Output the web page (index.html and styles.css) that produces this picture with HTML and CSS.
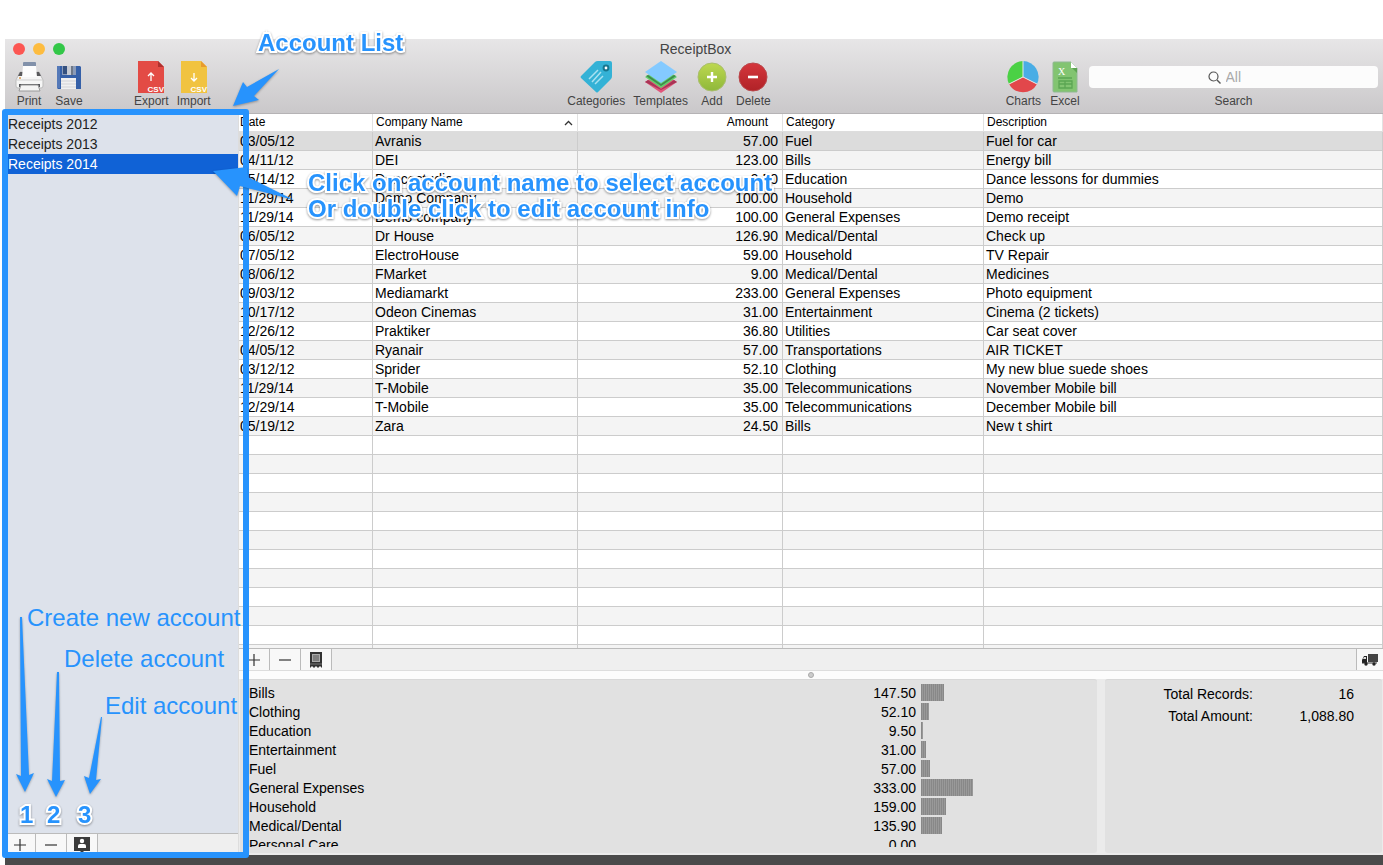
FILE: index.html
```
<!DOCTYPE html>
<html lang="en">
<head>
  <meta charset="UTF-8" />
  <meta name="viewport" content="width=device-width, initial-scale=1" />
  <title>ReceiptBox</title>
  <link rel="stylesheet" href="styles.css">
</head>
<body>

  <div class="window">
    <header class="toolbar">
      <div class="titlebar">
        <div class="lights">
          <button class="light red" aria-label="Close"></button>
          <button class="light yellow" aria-label="Minimize"></button>
          <button class="light green" aria-label="Zoom"></button>
        </div>
        <h1>ReceiptBox</h1>
      </div>
      <div class="tools">
        <button class="tool">
          <svg width="32" height="34" viewBox="0 0 32 34">
            <rect x="10" y="2" width="13" height="11" rx="1" fill="#8291aa"/>
            <path d="M7 12h19l4 8v6q0 2-2 2H5q-2 0-2-2v-6z" fill="#f6f6f6" stroke="#bbb"/>
            <path d="M7 12h19l2 4H5z" fill="#5a5a5d"/>
            <path d="M10 6h13l1 11H9z" fill="#fdfdfd"/>
            <path d="M3 20h27" stroke="#cfcfcf"/>
            <path d="M6 24h21v3H6z" fill="#55565a"/>
            <path d="M8 25h17l2 6H6z" fill="#f4f4f4" stroke="#9a9a9a"/>
            <circle cx="7" cy="18" r="1" fill="#d99a4e"/>
          </svg>
          Print
        </button>
        <button class="tool">
          <svg width="32" height="34" viewBox="0 0 32 34">
            <path d="M4 6h23l1 1v22H5l-1-1z" fill="#3560a8"/>
            <path d="M4 6h3v22H4z" fill="#5579b8"/>
            <path d="M9 6h14v9H9z" fill="#8a9bb8"/>
            <path d="M10 6h4v8h-4z" fill="#34507f"/>
            <path d="M14 6h4v9h-4z" fill="#c5cad3"/>
            <path d="M18 6h2v9h-2z" fill="#6e7887"/>
            <path d="M8 18h15v11H8z" fill="#f0f0f1"/>
            <path d="M8 21h15M8 24h15M8 27h15" stroke="#d2d3d7"/>
          </svg>
          Save
        </button>
        <span class="space"></span>
        <button class="tool">
          <svg width="32" height="34" viewBox="0 0 32 34">
            <path d="M3 1h20l6 6v26H3z" fill="#e34b45"/>
            <path d="M23 1l6 6h-6z" fill="#b0302f"/>
            <path d="M16 21v-8M13 16l3-3 3 3" fill="none" stroke="#fff" stroke-width="1.3"/>
            <text x="29" y="32" text-anchor="end" class="csv">CSV</text>
          </svg>
          Export
        </button>
        <button class="tool">
          <svg width="32" height="34" viewBox="0 0 32 34">
            <path d="M3 1h20l6 6v26H3z" fill="#f1c340"/>
            <path d="M23 1l6 6h-6z" fill="#e89b2e"/>
            <path d="M16 13v8M13 18l3 3 3-3" fill="none" stroke="#fff" stroke-width="1.3"/>
            <text x="29" y="32" text-anchor="end" class="csv">CSV</text>
          </svg>
          Import
        </button>
        <span class="stretch"></span>
        <button class="tool">
          <svg width="32" height="34" viewBox="0 0 32 34">
            <path d="M15 2q1-1 3-1h12q2 0 2 2v13q0 2-1 3L18 32q-1 1-2 0L1 18q-1-1 0-2z" fill="#34b2d6"/>
            <circle cx="26" cy="8" r="3.4" fill="#17768f"/>
            <circle cx="26" cy="8" r="1.4" fill="#fff"/>
            <path d="M18 10l-9 9M21 12L12 22M23 16l-8 8" stroke="#a9e2f1" stroke-width="1.5"/>
          </svg>
          Categories
        </button>
        <button class="tool">
          <svg width="32" height="34" viewBox="0 0 32 34">
            <path d="M16 12l16 10-16 11L0 22z" fill="#e0567a"/>
            <path d="M0 22l3-2 13 9 13-9 3 2-4 2-12 6-12-6z" fill="#a83556"/>
            <path d="M16 6l16 11-16 11L0 17z" fill="#62cf6c"/>
            <path d="M3 15l13 9 13-9 2 1-15 10L1 16z" fill="#3f8b4c"/>
            <path d="M16 1l16 11-16 11L0 12z" fill="#84caff"/>
          </svg>
          Templates
        </button>
        <button class="tool">
          <svg width="32" height="34" viewBox="0 0 32 34">
            <defs>
              <linearGradient id="lime" x2="0" y2="1"><stop stop-color="#bdd850"/><stop offset="1" stop-color="#8fb83a"/></linearGradient>
            </defs>
            <circle cx="16" cy="17" r="14" fill="url(#lime)" stroke="#a9bd6d"/>
            <path d="M16 12v10M11 17h10" stroke="#fff" stroke-width="2.4"/>
          </svg>
          Add
        </button>
        <button class="tool">
          <svg width="32" height="34" viewBox="0 0 32 34">
            <defs>
              <linearGradient id="crimson" x2="0" y2="1"><stop stop-color="#d5363c"/><stop offset="1" stop-color="#b02227"/></linearGradient>
            </defs>
            <circle cx="16" cy="17" r="14" fill="url(#crimson)" stroke="#b9474b"/>
            <path d="M11 17h10" stroke="#fff" stroke-width="2.6"/>
          </svg>
          Delete
        </button>
        <span class="space large"></span>
        <button class="tool">
          <svg width="32" height="34" viewBox="0 0 32 34">
            <path d="M16 17V1a16 16 0 0 1 14 23z" fill="#49ade5"/>
            <path d="M16 17l14 7a16 16 0 0 1-28 0z" fill="#e2474b"/>
            <path d="M16 17L2 24A16 16 0 0 1 16 1z" fill="#4bd145"/>
            <path d="M16 1v16l14 7M16 17L2 24" fill="none" stroke="#e8e8e8"/>
          </svg>
          Charts
        </button>
        <button class="tool">
          <svg width="32" height="34" viewBox="0 0 32 34">
            <path d="M5 2h17l6 6v24H5q-1 0-1-1V3q0-1 1-1z" fill="#82c471" stroke="#8fb893"/>
            <path d="M22 2l6 6h-6z" fill="#fff"/>
            <path d="M23 8h5v5z" fill="#5da452"/>
            <text x="9" y="15" class="xls">X</text>
            <path d="M9 18h14M10 21h13v7H10zM10 24h13M16 21v7" fill="none" stroke="#5ba653" stroke-width="1.3"/>
          </svg>
          Excel
        </button>
        <div class="search">
          <div class="search-box">
            <svg width="13" height="13" viewBox="0 0 13 13">
              <circle cx="5.5" cy="5.5" r="4.5" fill="none" stroke="#555" stroke-width="1.2"/>
              <path d="M9 9l3.5 3.5" stroke="#555" stroke-width="1.4"/>
            </svg>
            <input type="text" id="search" placeholder="All" />
          </div>
          <label for="search">Search</label>
        </div>
      </div>
    </header>

    <div class="content">
      <aside class="sidebar">
        <ul class="accounts">
          <li><a href="#">Receipts 2012</a></li>
          <li><a href="#">Receipts 2013</a></li>
          <li><a href="#" class="selected">Receipts 2014</a></li>
        </ul>
        <div class="button-bar">
          <button aria-label="Create new account"><svg width="12" height="12" viewBox="0 0 12 12"><path d="M6 0v12M0 6h12" stroke="#333" stroke-width="1.2"/></svg></button>
          <button aria-label="Delete account"><svg width="12" height="12" viewBox="0 0 12 12"><path d="M0 6h12" stroke="#333" stroke-width="1.2"/></svg></button>
          <button aria-label="Edit account"><svg width="16" height="18" viewBox="0 0 16 18"><path d="M0 1h16v14h-6l-2 2-2-2H0z" fill="#3b3b3b"/><circle cx="8" cy="5" r="2.2" fill="#fff"/><path d="M4 12V10q0-2 2-2h4q2 0 2 2v2z" fill="#fff"/></svg></button>
        </div>
      </aside>

      <main class="main">
        <div class="table-wrap">
          <table class="receipts">
            <colgroup><col class="col-date"><col class="col-company"><col class="col-amount"><col class="col-category"><col></colgroup>
            <thead>
              <tr>
                <th>Date</th>
                <th class="sorted">Company Name <svg width="9" height="6" viewBox="0 0 9 6"><path d="M1 5l3.500-3.500L8 5" fill="none" stroke="#333" stroke-width="1.3"/></svg></th>
                <th class="num">Amount</th>
                <th>Category</th>
                <th>Description</th>
              </tr>
            </thead>
            <tbody>
              <tr class="selected"><td>03/05/12</td><td>Avranis</td><td>57.00</td><td>Fuel</td><td>Fuel for car</td></tr>
              <tr><td>04/11/12</td><td>DEI</td><td>123.00</td><td>Bills</td><td>Energy bill</td></tr>
              <tr><td>05/14/12</td><td>Dancestudio</td><td>9.50</td><td>Education</td><td>Dance lessons for dummies</td></tr>
              <tr><td>11/29/14</td><td>Demo Company</td><td>100.00</td><td>Household</td><td>Demo</td></tr>
              <tr><td>11/29/14</td><td>Demo company</td><td>100.00</td><td>General Expenses</td><td>Demo receipt</td></tr>
              <tr><td>06/05/12</td><td>Dr House</td><td>126.90</td><td>Medical/Dental</td><td>Check up</td></tr>
              <tr><td>07/05/12</td><td>ElectroHouse</td><td>59.00</td><td>Household</td><td>TV Repair</td></tr>
              <tr><td>08/06/12</td><td>FMarket</td><td>9.00</td><td>Medical/Dental</td><td>Medicines</td></tr>
              <tr><td>09/03/12</td><td>Mediamarkt</td><td>233.00</td><td>General Expenses</td><td>Photo equipment</td></tr>
              <tr><td>10/17/12</td><td>Odeon Cinemas</td><td>31.00</td><td>Entertainment</td><td>Cinema (2 tickets)</td></tr>
              <tr><td>12/26/12</td><td>Praktiker</td><td>36.80</td><td>Utilities</td><td>Car seat cover</td></tr>
              <tr><td>04/05/12</td><td>Ryanair</td><td>57.00</td><td>Transportations</td><td>AIR TICKET</td></tr>
              <tr><td>03/12/12</td><td>Sprider</td><td>52.10</td><td>Clothing</td><td>My new blue suede shoes</td></tr>
              <tr><td>11/29/14</td><td>T-Mobile</td><td>35.00</td><td>Telecommunications</td><td>November Mobile bill</td></tr>
              <tr><td>12/29/14</td><td>T-Mobile</td><td>35.00</td><td>Telecommunications</td><td>December Mobile bill</td></tr>
              <tr><td>05/19/12</td><td>Zara</td><td>24.50</td><td>Bills</td><td>New t shirt</td></tr>
              <tr><td></td><td></td><td></td><td></td><td></td></tr>
              <tr><td></td><td></td><td></td><td></td><td></td></tr>
              <tr><td></td><td></td><td></td><td></td><td></td></tr>
              <tr><td></td><td></td><td></td><td></td><td></td></tr>
              <tr><td></td><td></td><td></td><td></td><td></td></tr>
              <tr><td></td><td></td><td></td><td></td><td></td></tr>
              <tr><td></td><td></td><td></td><td></td><td></td></tr>
              <tr><td></td><td></td><td></td><td></td><td></td></tr>
              <tr><td></td><td></td><td></td><td></td><td></td></tr>
              <tr><td></td><td></td><td></td><td></td><td></td></tr>
              <tr><td></td><td></td><td></td><td></td><td></td></tr>
              <tr><td></td><td></td><td></td><td></td><td></td></tr>
            </tbody>
          </table>
        </div>

        <div class="button-bar">
          <button aria-label="Add receipt"><svg width="12" height="12" viewBox="0 0 12 12"><path d="M6 0v12M0 6h12" stroke="#333" stroke-width="1.2"/></svg></button>
          <button aria-label="Remove receipt"><svg width="12" height="12" viewBox="0 0 12 12"><path d="M0 6h12" stroke="#333" stroke-width="1.2"/></svg></button>
          <button aria-label="Show receipt"><svg width="14" height="18" viewBox="0 0 14 18"><path d="M1 1h12v16l-2-2-2 2-2-2-2 2-2-2-2 2z" fill="#333"/><path d="M3 3h8v8H3z" fill="#aaa"/><path d="M4 5h6M4 7h6M4 9h6" stroke="#555"/><path d="M1 13h12" stroke="#777"/></svg></button>
          <button class="truck" aria-label="Deliver"><svg width="16" height="13" viewBox="0 0 16 13"><path d="M6 1h10v8H6z" fill="#444"/><path d="M5 3v7H0V7l2-4z" fill="#222"/><path d="M2 4h2v2H1z" fill="#ddd"/><path d="M0 10h15" stroke="#333"/><circle cx="4" cy="11" r="1.700" fill="#222"/><circle cx="12" cy="11" r="1.700" fill="#222"/></svg></button>
        </div>

        <div class="splitter"><span class="dot"></span></div>

        <div class="panels">
          <section class="panel summary">
            <div class="summary-scroll">
              <table class="categories">
                <tr><th>Bills</th><td>147.50</td><td><div class="bar" style="width:23px"></div></td></tr>
                <tr><th>Clothing</th><td>52.10</td><td><div class="bar" style="width:8px"></div></td></tr>
                <tr><th>Education</th><td>9.50</td><td><div class="bar" style="width:2px"></div></td></tr>
                <tr><th>Entertainment</th><td>31.00</td><td><div class="bar" style="width:5px"></div></td></tr>
                <tr><th>Fuel</th><td>57.00</td><td><div class="bar" style="width:9px"></div></td></tr>
                <tr><th>General Expenses</th><td>333.00</td><td><div class="bar" style="width:52px"></div></td></tr>
                <tr><th>Household</th><td>159.00</td><td><div class="bar" style="width:25px"></div></td></tr>
                <tr><th>Medical/Dental</th><td>135.90</td><td><div class="bar" style="width:21px"></div></td></tr>
                <tr><th>Personal Care</th><td>0.00</td><td></td></tr>
              </table>
            </div>
          </section>
          <section class="panel totals">
            <dl>
              <dt>Total Records:</dt><dd>16</dd>
              <dt>Total Amount:</dt><dd>1,088.80</dd>
            </dl>
          </section>
        </div>
      </main>
    </div>
  </div>
  <div class="desktop"></div>

  <!-- help notes drawn over the window -->
  <div class="notes">
    <div class="frame"></div>
    <svg class="arrows-top" width="300" height="210" viewBox="0 0 300 210">
      <path d="M279 69L247 87l-4-5-10 24 26-6-5-4z"/>
      <path d="M213 171l34-4 1 10 46 23-54-14-3 10z"/>
    </svg>
    <svg class="arrows-bottom" width="110" height="255" viewBox="0 610 110 255">
      <path d="M20 617h2l7 158 5-2-9 19-9-18 5 2z"/>
      <path d="M57 672h2l1 109 5-1-9 17-9-18 5 2z"/>
      <path d="M101 717h1l-6 63 5-1-11 15-6-18 5 2z"/>
    </svg>
    <p class="note bold title-note">Account List</p>
    <p class="note bold select-note">Click on account name to select account<br>Or double click to edit account info</p>
    <p class="note create-note">Create new account</p>
    <p class="note delete-note">Delete account</p>
    <p class="note edit-note">Edit account</p>
    <p class="note bold step one">1</p>
    <p class="note bold step two">2</p>
    <p class="note bold step three">3</p>
  </div>

</body>
</html>
```
FILE: styles.css
```
* {
  box-sizing: border-box;
}

body {
  margin: 0;
  min-height: 100vh;
  position: relative;
  display: flex;
  flex-direction: column;
  padding: 39px 0 0 5px;
  background: #fff;
  color: #000;
  font-family: "Liberation Sans", Arial, sans-serif;
  font-size: 14px;
  overflow: hidden;
}

button {
  font: inherit;
  color: inherit;
  border: none;
  background: none;
  padding: 0;
  margin: 0;
}

.window {
  flex: 1;
  display: flex;
  flex-direction: column;
  background: #ebebeb;
}

/* toolbar */
.toolbar {
  height: 75px;
  background: linear-gradient(#e7e6e7, #cac8ca);
  border-bottom: 1px solid #b5b3b5;
  color: #444;
}

.titlebar {
  display: grid;
  grid-template-columns: 1fr auto 1fr;
  align-items: center;
  height: 20px;
  padding-left: 3px;
}

.titlebar h1 {
  margin: 0;
  font-size: 14px;
  font-weight: normal;
}

.lights {
  display: flex;
  gap: 8px;
  padding-left: 5px;
}

.light {
  width: 12px;
  height: 12px;
  border-radius: 50%;
}

.red { background: #fc5753; }
.yellow { background: #fdbc40; }
.green { background: #33c748; }

.tools {
  display: flex;
  gap: 8px;
  padding: 1px 5px 0 8px;
  font-size: 12px;
  line-height: 14px;
}

.tool {
  min-width: 32px;
  display: flex;
  flex-direction: column;
  align-items: center;
}

.space {
  width: 33px;
}

.space.large {
  width: 219px;
}

.stretch {
  flex: 1;
}

.csv {
  font-size: 8px;
  font-weight: bold;
  fill: #fff;
}

.xls {
  font-family: "Liberation Serif", serif;
  font-size: 10px;
  fill: #fff;
}

.search {
  width: 289px;
  padding-top: 6px;
  text-align: center;
}

.search-box {
  display: flex;
  align-items: center;
  justify-content: center;
  gap: 5px;
  height: 22px;
  margin-bottom: 6px;
  background: #fcfcfc;
  border-radius: 4px;
}

.search-box input {
  width: 34px;
  padding: 0;
  border: none;
  outline: none;
  background: none;
  font: 14px "Liberation Sans", Arial, sans-serif;
}

.search-box input::placeholder {
  color: #aaa;
}

/* sidebar */
.content {
  flex: 1;
  display: flex;
}

.sidebar {
  width: 233px;
  display: flex;
  flex-direction: column;
  background: #dde2eb;
}

.accounts {
  flex: 1;
  list-style: none;
  margin: 0;
  padding: 0;
}

.accounts a {
  display: block;
  padding-left: 3px;
  line-height: 20px;
  color: #222;
  text-decoration: none;
}

.accounts a.selected {
  background: #1062d6;
  color: #fff;
}

.button-bar {
  display: flex;
  height: 22px;
  background: #efefef;
  border-top: 1px solid #bbb;
}

.button-bar button {
  width: 31px;
  display: flex;
  align-items: center;
  justify-content: center;
  background: #f8f8f8;
  border-right: 1px solid #bbb;
}

.button-bar .truck {
  width: 27px;
  margin-left: auto;
  border-right: none;
  border-left: 1px solid #bbb;
}

/* receipts table */
.main {
  flex: 1;
  min-width: 0;
  display: flex;
  flex-direction: column;
  border-left: 1px solid #ddd;
}

.table-wrap {
  flex: 1 1 0;
  overflow: hidden;
  background: #fff;
}

.receipts {
  width: 100%;
  table-layout: fixed;
  border-collapse: separate;
  border-spacing: 0;
}

.col-date { width: 134px; }
.col-company { width: 205px; }
.col-amount { width: 205px; }
.col-category { width: 201px; }

.receipts th {
  height: 18px;
  padding: 0 4px 0 3px;
  border-right: 1px solid #e2e2e2;
  border-bottom: 1px solid #ddd;
  font-size: 12px;
  font-weight: normal;
  line-height: 17px;
  text-align: left;
}

.receipts .num {
  text-align: right;
  padding-right: 14px;
}

.sorted svg {
  float: right;
  margin-top: 6px;
}

.receipts td {
  height: 19px;
  padding: 0 4px 0 2px;
  border-right: 1px solid #ccc;
  border-bottom: 1px solid #ccc;
  line-height: 18px;
  white-space: nowrap;
}

.receipts td:first-child,
.receipts th:first-child {
  padding-left: 1px;
}

.receipts td:nth-child(3) {
  text-align: right;
}

.receipts tbody tr:nth-child(even) {
  background: #f4f4f4;
}

.receipts tbody .selected {
  background: #dcdcdc;
}

/* bottom panels */
.splitter {
  height: 9px;
  display: flex;
  align-items: center;
  justify-content: center;
  background: #fcfcfc;
  border-top: 1px solid #ddd;
}

.dot {
  width: 6px;
  height: 6px;
  border-radius: 50%;
  background: #ccc;
  border: 1px solid #aaa;
}

.panels {
  display: flex;
  gap: 8px;
  height: 176px;
  padding: 0 1px 2px;
}

.panel {
  background: #e1e1e1;
  border-radius: 3px;
  border-top: 1px solid #d8d8d8;
}

.summary {
  flex: 1;
  padding: 4px 0 6px 9px;
}

.summary-scroll {
  height: 100%;
  overflow: hidden;
}

.categories {
  width: 100%;
  border-collapse: collapse;
}

.categories th,
.categories td {
  height: 19px;
  padding: 0;
  line-height: 19px;
  font-weight: normal;
  text-align: left;
  vertical-align: top;
}

.categories td {
  padding-right: 5px;
  text-align: right;
}

.categories td:last-child {
  width: 176px;
  padding: 0;
}

.bar {
  height: 17px;
  background: repeating-linear-gradient(90deg, #888 0 1px, #999 1px 2px);
}

.totals {
  width: 277px;
  padding: 3px 28px 0 0;
}

.totals dl {
  display: grid;
  grid-template-columns: 1fr 101px;
  margin: 0;
  line-height: 22px;
  text-align: right;
}

.totals dd {
  margin: 0;
}

.desktop {
  height: 10px;
  background: #4a4a4a;
}

/* notes */
.notes {
  position: absolute;
  inset: 0;
  pointer-events: none;
}

.notes svg {
  position: absolute;
  left: 0;
  fill: #2793fd;
  filter: drop-shadow(0 1px 1px rgba(0, 0, 0, 0.3));
}

.arrows-top { top: 0; }
.arrows-bottom { bottom: 0; }

.frame {
  position: absolute;
  left: 2px;
  top: 109px;
  bottom: 7px;
  width: 247px;
  border: 6px solid #2793fd;
  border-radius: 3px;
}

.note {
  position: absolute;
  margin: 0;
  color: #2793fd;
  font-size: 24px;
  line-height: 26px;
  white-space: nowrap;
}

.bold {
  font-weight: bold;
  -webkit-text-stroke: 4px #fff;
  paint-order: stroke fill;
  filter: drop-shadow(0 1px 1px rgba(0, 0, 0, 0.4));
}

.title-note { left: 258px; top: 30px; }
.select-note { left: 308px; top: 170px; }
.create-note { left: 27px; bottom: 234px; }
.delete-note { left: 64px; bottom: 193px; }
.edit-note { left: 105px; bottom: 146px; }
.step { bottom: 37px; }
.one { left: 20px; }
.two { left: 47px; }
.three { left: 78px; }
```
